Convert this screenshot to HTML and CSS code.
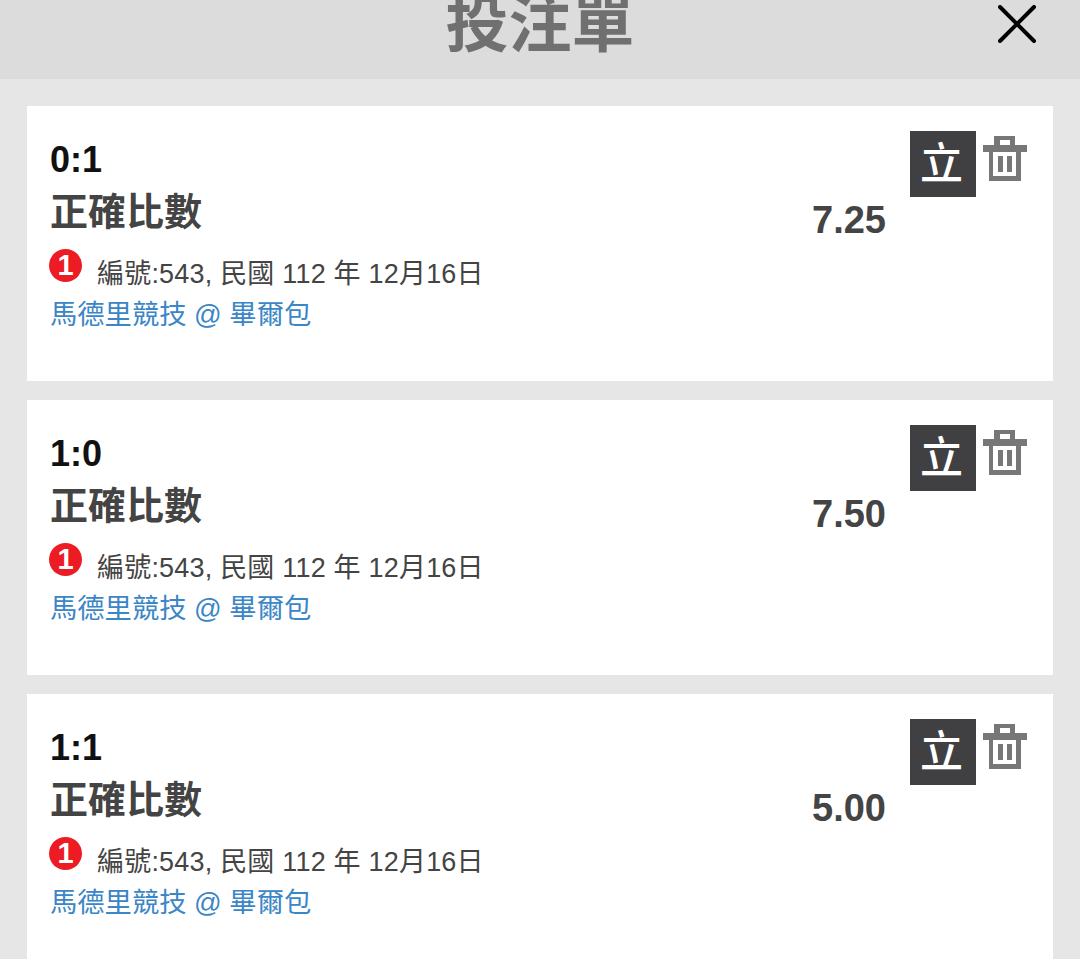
FILE: index.html
```html
<!DOCTYPE html>
<html lang="zh-Hant">
<head>
  <meta charset="UTF-8" />
  <title>投注單</title>
  <link rel="stylesheet" href="styles.css">
</head>
<body>
  <header class="topbar">
    <h1 class="topbar-title">投注單</h1>
    <svg class="close-icon" viewBox="0 0 38 38"><path d="M2 2L36 36M36 2L2 36" /></svg>
  </header>

  <main class="slip-list">
    <section class="slip-card">
      <div class="slip-info">
        <div class="slip-score">0:1</div>
        <div class="slip-market">正確比數</div>
        <div class="slip-meta"><span class="leg-badge">1</span><span class="slip-event">編號:543, 民國 112 年 12月16日</span></div>
        <div class="slip-match">馬德里競技 @ 畢爾包</div>
      </div>
      <div class="slip-odds">7.25</div>
      <div class="slip-actions">
        <span class="live-btn">立</span>
        <svg class="trash-icon" viewBox="0 0 44 45"><path fill-rule="evenodd" d="M11 0H32V9H44V16H38V45H6V16H0V9H11ZM17 4V9H27V4ZM10 16V40H33V16ZM15 20H20V36H15ZM24 20H29V36H24Z" /></svg>
      </div>
    </section>

    <section class="slip-card">
      <div class="slip-info">
        <div class="slip-score">1:0</div>
        <div class="slip-market">正確比數</div>
        <div class="slip-meta"><span class="leg-badge">1</span><span class="slip-event">編號:543, 民國 112 年 12月16日</span></div>
        <div class="slip-match">馬德里競技 @ 畢爾包</div>
      </div>
      <div class="slip-odds">7.50</div>
      <div class="slip-actions">
        <span class="live-btn">立</span>
        <svg class="trash-icon" viewBox="0 0 44 45"><path fill-rule="evenodd" d="M11 0H32V9H44V16H38V45H6V16H0V9H11ZM17 4V9H27V4ZM10 16V40H33V16ZM15 20H20V36H15ZM24 20H29V36H24Z" /></svg>
      </div>
    </section>

    <section class="slip-card">
      <div class="slip-info">
        <div class="slip-score">1:1</div>
        <div class="slip-market">正確比數</div>
        <div class="slip-meta"><span class="leg-badge">1</span><span class="slip-event">編號:543, 民國 112 年 12月16日</span></div>
        <div class="slip-match">馬德里競技 @ 畢爾包</div>
      </div>
      <div class="slip-odds">5.00</div>
      <div class="slip-actions">
        <span class="live-btn">立</span>
        <svg class="trash-icon" viewBox="0 0 44 45"><path fill-rule="evenodd" d="M11 0H32V9H44V16H38V45H6V16H0V9H11ZM17 4V9H27V4ZM10 16V40H33V16ZM15 20H20V36H15ZM24 20H29V36H24Z" /></svg>
      </div>
    </section>
  </main>
</body>
</html>
```

FILE: styles.css
```css
html, body {
  height: 100%;
}

body {
  margin: 0;
  overflow: hidden;
  background: #e6e6e6;
  font-family: "Liberation Sans", "Noto Sans CJK TC", sans-serif;
  color: #444;
}

.topbar {
  height: 79px;
  background: #dcdcdc;
  display: flex;
  justify-content: center;
  position: relative;
  overflow: hidden;
}

.topbar-title {
  margin: -16px 0 0;
  font-size: 63px;
  line-height: 80px;
  font-weight: 700;
  color: #707070;
}

.close-icon {
  position: absolute;
  top: 5px;
  right: 44px;
  width: 38px;
  height: 38px;
  fill: none;
  stroke: #000;
  stroke-width: 4;
  stroke-linecap: round;
}

.slip-list {
  padding: 27px 27px 0;
  display: flex;
  flex-direction: column;
  gap: 19px;
}

.slip-card {
  height: 275px;
  flex: none;
  box-sizing: border-box;
  background: #fff;
  padding: 25px 26px 0 23px;
  display: flex;
  align-items: flex-start;
}

.slip-info {
  flex: 1;
}

.slip-score {
  font-size: 36px;
  line-height: 42px;
  margin-top: 8px;
  font-weight: 700;
  color: #111;
}

.slip-market {
  font-size: 38px;
  line-height: 52px;
  margin-top: 5px;
  font-weight: 700;
  color: #444;
}

.slip-meta {
  display: flex;
  align-items: flex-start;
  font-size: 27px;
  line-height: 40px;
  margin-top: 11px;
  color: #444;
}

.slip-event {
  margin-top: 5px;
  letter-spacing: 0.2px;
}

.leg-badge {
  width: 33px;
  height: 33px;
  border-radius: 50%;
  margin: 0 15px 0 -1px;
  background: #ed1c24;
  color: #fff;
  font-size: 29px;
  line-height: 33px;
  font-weight: 700;
  text-align: center;
}

.slip-match {
  font-size: 27.3px;
  line-height: 40px;
  margin-top: 1px;
  color: #3b86c6;
}

.slip-odds {
  font-size: 38px;
  line-height: 42px;
  margin: 68px 24px 0 0;
  font-weight: 700;
  color: #444;
}

.slip-actions {
  display: flex;
  align-items: flex-start;
  gap: 7px;
}

.live-btn {
  width: 66px;
  height: 66px;
  box-sizing: border-box;
  padding-right: 3px;
  background: #404042;
  color: #fff;
  font-size: 43px;
  line-height: 66px;
  font-weight: 500;
  text-align: center;
}

.trash-icon {
  width: 44px;
  height: 45px;
  margin-top: 5px;
  fill: #777;
}
```
